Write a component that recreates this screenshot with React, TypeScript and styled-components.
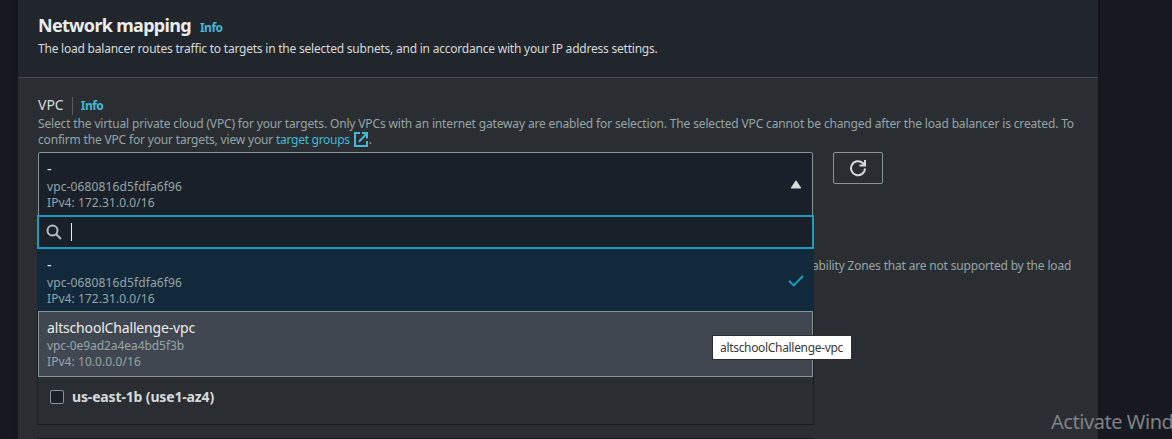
import React from 'react';
import styled, { createGlobalStyle } from 'styled-components';

const GlobalStyle = createGlobalStyle`
  * { box-sizing: border-box; }
  html, body { margin: 0; background: #16191f; }
  body {
    height: 439px;
    overflow: hidden;
    font-family: 'Noto Sans', 'Open Sans', sans-serif;
    font-size: 12px;
    line-height: 16px;
    color: #95a5a6;
  }
`;

const Page = styled.div`
  position: relative;
  height: 439px;
  overflow: hidden;
  padding: 0 74px 0 18px;
`;

const Panel = styled.section`
  height: 439px;
  background: #2a2e33;
  box-shadow: 0 0 2px 1px #101318;
`;

const PanelHeader = styled.header`
  height: 78px;
  padding: 13px 20px 0;
  background: #21252c;
  border-bottom: 1px solid #444953;
`;

const TitleRow = styled.div`
  display: flex;
  align-items: baseline;
  gap: 9px;
  height: 26px;
`;

const Title = styled.h2`
  margin: 0;
  font-size: 18px;
  line-height: 24px;
  font-weight: 700;
  letter-spacing: -0.69px;
  color: #eaeded;
`;

const Info = styled.a`
  font-weight: 700;
  letter-spacing: -0.5px;
  color: #44b9d6;
`;

const Subtitle = styled.p`
  margin: 2px 0 0;
  letter-spacing: -0.218px;
  white-space: nowrap;
  color: #d5dbdb;
`;

const PanelBody = styled.div`
  padding: 18px 20px 0;
`;

const LabelRow = styled.div`
  display: flex;
  align-items: center;
  height: 20px;
`;

const Label = styled.span`
  height: 18px;
  padding-right: 8px;
  margin-right: 8px;
  border-right: 1px solid #545b64;
  font-size: 14px;
  line-height: 16px;
  color: #d5dbdb;
`;

const Help = styled.div<{ $spacing: number }>`
  display: flex;
  height: 16px;
  white-space: pre;
  letter-spacing: ${(p) => p.$spacing}px;
`;

const HelpLink = styled.a`
  display: flex;
  gap: 4px;
  color: #44b9d6;
  letter-spacing: -0.28px;
`;

const ControlRow = styled.div`
  display: flex;
  align-items: flex-start;
  gap: 20px;
  margin-top: 4px;
`;

const Select = styled.div`
  position: relative;
  width: 775px;
  height: 65px;
`;

const Trigger = styled.div`
  display: flex;
  align-items: center;
  justify-content: space-between;
  height: 65px;
  padding: 0 10px 0 8px;
  background: #1a2029;
  border: 1px solid #879596;
  border-radius: 2px 2px 0 0;
`;

const Menu = styled.div`
  position: absolute;
  z-index: 1;
  top: 63px;
  left: -1px;
  width: 777px;
`;

const Search = styled.div`
  display: flex;
  align-items: center;
  height: 34px;
  padding-left: 7px;
  gap: 9px;
  background: #1a2029;
  border: 2px solid #1c9bbd;
`;

const Caret = styled.span`
  width: 1px;
  height: 18px;
  background: #e8eded;
`;

const Option = styled.div<{ $highlighted?: boolean }>`
  display: flex;
  align-items: center;
  justify-content: space-between;
  height: ${(p) => (p.$highlighted ? 66 : 62)}px;
  margin: ${(p) => (p.$highlighted ? '0 1px' : '0')};
  padding: ${(p) => (p.$highlighted ? '0 9px 0 8px' : '2px 10px 0 10px')};
  background: ${(p) => (p.$highlighted ? '#414750' : '#12293b')};
  border: ${(p) => (p.$highlighted ? '1px solid #879596' : '0')};
`;

const OptionText = styled.div`
  height: 52px;
  padding-top: 1px;
`;

const OptionName = styled.div`
  height: 19px;
  font-size: 14px;
  line-height: 18px;
  letter-spacing: -0.17px;
  color: #eaeded;
`;

const OptionDetail = styled.div<{ $spacing: number }>`
  height: 16px;
  white-space: nowrap;
  letter-spacing: ${(p) => p.$spacing}px;
`;

const RefreshButton = styled.button`
  display: flex;
  align-items: center;
  justify-content: center;
  width: 50px;
  height: 32px;
  padding: 0;
  background: transparent;
  border: 1px solid #879596;
  border-radius: 2px;
`;

const ZoneNote = styled.p`
  margin: 41px 0 0;
  padding-left: 774px;
  white-space: nowrap;
  letter-spacing: -0.18px;
`;

const ZoneCard = styled.div`
  display: flex;
  align-items: flex-start;
  gap: 8px;
  width: 777px;
  height: 149px;
  margin: 2px 0 0 -1px;
  padding: 113px 12px 0;
  border: 1px solid #1a1d22;
`;

const Checkbox = styled.span`
  width: 14px;
  height: 14px;
  background: #1a2029;
  border: 1px solid #879596;
  border-radius: 2px;
`;

const ZoneName = styled.span`
  font-size: 14px;
  line-height: 14px;
  font-weight: 700;
  letter-spacing: -0.15px;
  color: #d5dbdb;
`;

const NextCard = styled.div`
  width: 777px;
  height: 20px;
  margin: 13px 0 0 -1px;
  border: 1px solid #1a1d22;
`;

const Tooltip = styled.div`
  position: absolute;
  z-index: 2;
  left: 712px;
  top: 335px;
  width: 140px;
  height: 25px;
  padding-left: 7px;
  background: #fff;
  border: 1px solid #2b2b2b;
  line-height: 24px;
  letter-spacing: -0.32px;
  white-space: nowrap;
  color: #3a3a3a;
`;

const Watermark = styled.div`
  position: absolute;
  z-index: 2;
  left: 1051px;
  top: 408px;
  font-size: 20px;
  line-height: 28px;
  letter-spacing: -0.45px;
  white-space: nowrap;
  color: #7e8185;
`;

const VpcDetails = ({ name, id, cidr, idSpacing }: { name: string; id: string; cidr: string; idSpacing: number }) => (
  <OptionText>
    <OptionName>{name}</OptionName>
    <OptionDetail $spacing={idSpacing}>{id}</OptionDetail>
    <OptionDetail $spacing={0.06}>{cidr}</OptionDetail>
  </OptionText>
);

const ExternalIcon = () => (
  <svg width="15" height="15" viewBox="0 0 15 15" fill="none" stroke="#44b9d6" strokeWidth="2">
    <path d="M6 1H1v13h12V9M8 1h5v5.5M12.5 1.8 5 9.8" />
  </svg>
);

const SearchIcon = () => (
  <svg width="16" height="16" viewBox="0 0 16 16" fill="none" stroke="#b4bbc0" strokeWidth="2">
    <circle cx="6.5" cy="6.5" r="5" />
    <path d="m10.2 10.2 4.8 4.8" />
  </svg>
);

const RefreshIcon = () => (
  <svg width="18" height="18" viewBox="0 0 18 18" fill="none" stroke="#d5dbdb" strokeWidth="2">
    <path d="M16 9.5a7 7 0 1 1-2.2-5.4L15.5 6" />
    <path d="M16 1v5.5h-5.5" />
  </svg>
);

export default function App() {
  return (
    <Page>
      <GlobalStyle />
      <Panel>
        <PanelHeader>
          <TitleRow>
            <Title>Network mapping</Title>
            <Info>Info</Info>
          </TitleRow>
          <Subtitle>
            The load balancer routes traffic to targets in the selected subnets, and in accordance with your IP address settings.
          </Subtitle>
        </PanelHeader>
        <PanelBody>
          <LabelRow>
            <Label>VPC</Label>
            <Info>Info</Info>
          </LabelRow>
          <Help $spacing={-0.152}>
            Select the virtual private cloud (VPC) for your targets. Only VPCs with an internet gateway are enabled for selection. The selected VPC cannot be changed after the load balancer is created. To
          </Help>
          <Help $spacing={-0.175}>
            {'confirm the VPC for your targets, view your '}
            <HelpLink>
              target groups
              <ExternalIcon />
            </HelpLink>
            .
          </Help>
          <ControlRow>
            <Select>
              <Trigger>
                <VpcDetails name="-" id="vpc-0680816d5fdfa6f96" cidr="IPv4: 172.31.0.0/16" idSpacing={0.12} />
                <svg width="12" height="9" viewBox="0 0 12 9">
                  <path d="M6 .8 10.8 8H1.2Z" fill="#d5dbdb" stroke="#d5dbdb" strokeLinejoin="round" />
                </svg>
              </Trigger>
              <Menu>
                <Search>
                  <SearchIcon />
                  <Caret />
                </Search>
                <Option>
                  <VpcDetails name="-" id="vpc-0680816d5fdfa6f96" cidr="IPv4: 172.31.0.0/16" idSpacing={0.12} />
                  <svg width="16" height="12" viewBox="0 0 16 12" fill="none" stroke="#1c9bbd" strokeWidth="2">
                    <path d="m1 5.7 4.7 4.7L15 1" />
                  </svg>
                </Option>
                <Option $highlighted>
                  <VpcDetails name="altschoolChallenge-vpc" id="vpc-0e9ad2a4ea4bd5f3b" cidr="IPv4: 10.0.0.0/16" idSpacing={-0.07} />
                </Option>
              </Menu>
            </Select>
            <RefreshButton aria-label="Refresh">
              <RefreshIcon />
            </RefreshButton>
          </ControlRow>
          <ZoneNote>ability Zones that are not supported by the load</ZoneNote>
          <ZoneCard>
            <Checkbox />
            <ZoneName>us-east-1b (use1-az4)</ZoneName>
          </ZoneCard>
          <NextCard />
        </PanelBody>
      </Panel>
      <Tooltip>altschoolChallenge-vpc</Tooltip>
      <Watermark>Activate Wind</Watermark>
    </Page>
  );
}
